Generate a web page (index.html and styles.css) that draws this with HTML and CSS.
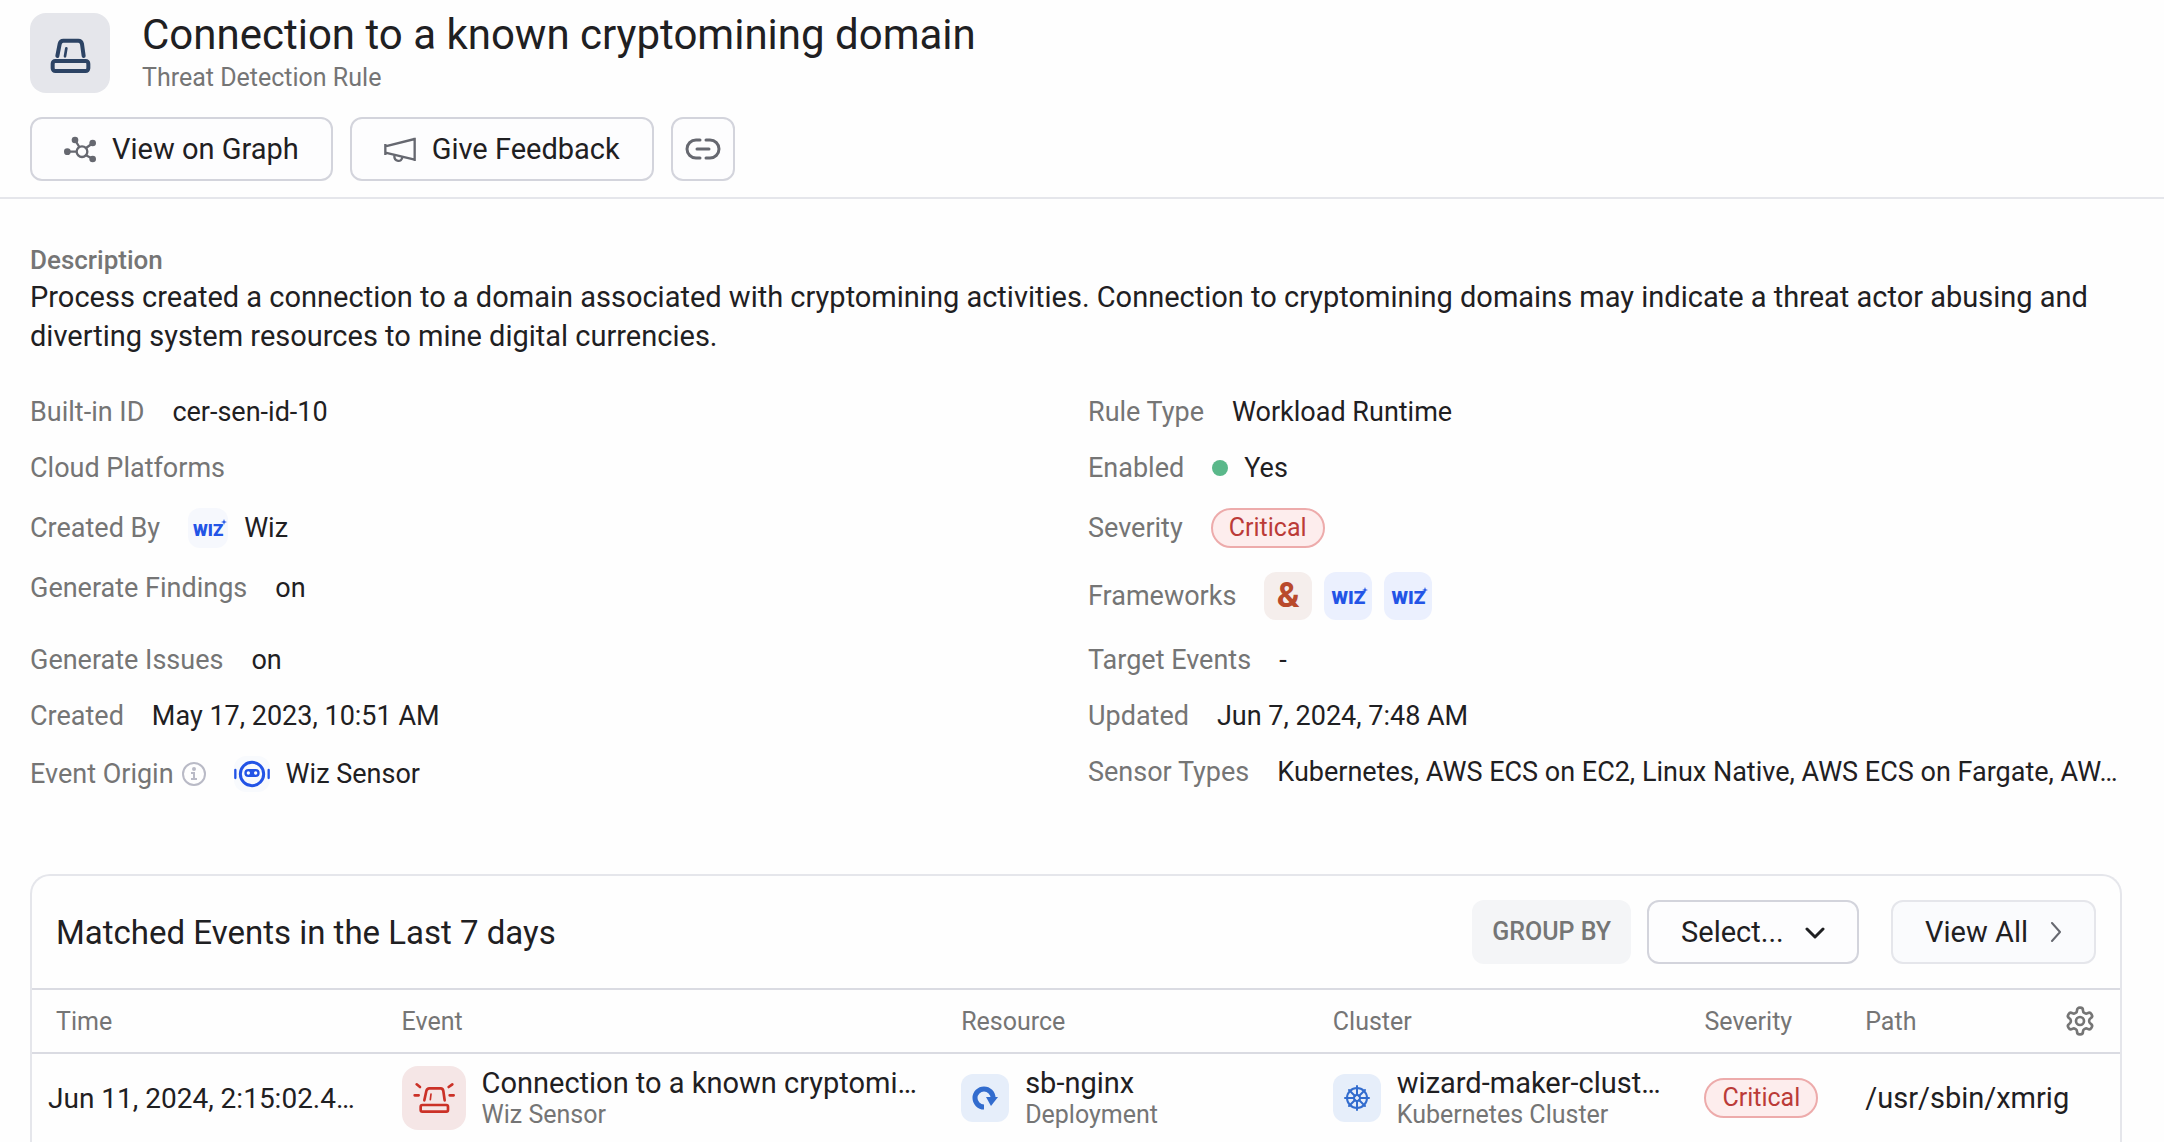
FILE: index.html
```
<!DOCTYPE html>
<html lang="en">
<head>
    <meta charset="UTF-8">
    <meta name="viewport" content="width=device-width, initial-scale=1.0">
    <title>Connection to a known cryptomining domain</title>
    <link rel="stylesheet" href="styles.css">
</head>
<body>
    <header class="page-header">
        <div class="rule-heading">
            <div class="rule-icon">
                <svg viewBox="0 0 240 240" fill="none" stroke="currentColor" stroke-width="12" stroke-linecap="round" stroke-linejoin="round">
                    <path d="M82 129 89 93q2-10 11-10h45q9 0 11 10l5 36"/>
                    <path d="M109 106l-4 24" stroke-width="8"/>
                    <rect x="68" y="144" width="107" height="30" rx="8"/>
                </svg>
            </div>
            <div>
                <h1 class="rule-title">Connection to a known cryptomining domain</h1>
                <p class="rule-type">Threat Detection Rule</p>
            </div>
        </div>
        <div class="actions">
            <button class="button" type="button">
                <svg width="32" height="28" viewBox="0 0 96 84" fill="none" stroke="currentColor" stroke-width="7">
                    <circle cx="54" cy="50" r="16"/>
                    <path d="M33 15l13 21M87 24 66 39M9 50h29M87 72 66 61"/>
                    <g fill="currentColor" stroke="none">
                        <circle cx="33" cy="15" r="10"/>
                        <circle cx="86" cy="24" r="10"/>
                        <circle cx="10" cy="50" r="10"/>
                        <circle cx="86" cy="72" r="10"/>
                    </g>
                </svg>
                View on Graph
            </button>
            <button class="button" type="button">
                <svg width="32" height="28" viewBox="0 0 96 84" fill="none" stroke="currentColor" stroke-width="7">
                    <path d="M4 27v33M4 34 92 12M4 53l88 21M92 8v70"/>
                    <path d="M31 61c-1 20 23 22 24 5"/>
                </svg>
                Give Feedback
            </button>
            <button class="button button-icon" type="button" aria-label="Copy link">
                <svg width="36" height="24" viewBox="0 0 36 24" fill="none" stroke="currentColor" stroke-width="3" stroke-linecap="round">
                    <path d="M15 3h-4a9 9 0 0 0 0 18h4M21 3h4a9 9 0 0 1 0 18h-4M12 12h12"/>
                </svg>
            </button>
        </div>
    </header>

    <main>
        <section class="details">
            <h2 class="description-label">Description</h2>
            <p class="description">Process created a connection to a domain associated with cryptomining activities. Connection to cryptomining domains may indicate a threat actor abusing and diverting system resources to mine digital currencies.</p>

            <dl class="properties">
                <div class="property">
                    <dt>Built-in ID</dt>
                    <dd>cer-sen-id-10</dd>
                </div>
                <div class="property">
                    <dt>Rule Type</dt>
                    <dd>Workload Runtime</dd>
                </div>
                <div class="property">
                    <dt>Cloud Platforms</dt>
                    <dd></dd>
                </div>
                <div class="property">
                    <dt>Enabled</dt>
                    <dd><span class="status-dot"></span>Yes</dd>
                </div>
                <div class="property">
                    <dt>Created By</dt>
                    <dd>
                        <span class="wiz-tile wiz-small">WIZ<svg viewBox="0 0 8 8"><path d="M4 0l1 3 3 1-3 1-1 3-1-3-3-1 3-1z" fill="currentColor"/></svg></span>
                        Wiz
                    </dd>
                </div>
                <div class="property">
                    <dt>Severity</dt>
                    <dd><span class="badge">Critical</span></dd>
                </div>
                <div class="property">
                    <dt>Generate Findings</dt>
                    <dd>on</dd>
                </div>
                <div class="property">
                    <dt>Frameworks</dt>
                    <dd class="frameworks">
                        <span class="amp-tile">&amp;</span>
                        <span class="wiz-tile">WIZ<svg viewBox="0 0 8 8"><path d="M4 0l1 3 3 1-3 1-1 3-1-3-3-1 3-1z" fill="currentColor"/></svg></span>
                        <span class="wiz-tile">WIZ<svg viewBox="0 0 8 8"><path d="M4 0l1 3 3 1-3 1-1 3-1-3-3-1 3-1z" fill="currentColor"/></svg></span>
                    </dd>
                </div>
                <div class="property">
                    <dt>Generate Issues</dt>
                    <dd>on</dd>
                </div>
                <div class="property">
                    <dt>Target Events</dt>
                    <dd>-</dd>
                </div>
                <div class="property">
                    <dt>Created</dt>
                    <dd>May 17, 2023, 10:51 AM</dd>
                </div>
                <div class="property">
                    <dt>Updated</dt>
                    <dd>Jun 7, 2024, 7:48 AM</dd>
                </div>
                <div class="property">
                    <dt>
                        Event Origin
                        <svg class="info" width="24" height="24" viewBox="0 0 24 24" fill="none" stroke="currentColor" stroke-width="2">
                            <circle cx="12" cy="12" r="11"/>
                            <path d="M9 11h3v6M9 17h6"/>
                            <circle cx="12" cy="7" r="1"/>
                        </svg>
                    </dt>
                    <dd>
                        <svg class="sensor" width="36" height="36" viewBox="0 0 108 108" fill="none" stroke="currentColor">
                            <circle cx="54" cy="54" r="35" stroke-width="9"/>
                            <path d="M4 42v24M104 42v24" stroke-width="7" stroke-linecap="round"/>
                            <rect x="31" y="39" width="46" height="24" rx="12" fill="currentColor" stroke="none"/>
                            <circle cx="43" cy="51" r="5" fill="#fff" stroke="none"/>
                            <circle cx="65" cy="51" r="5" fill="#fff" stroke="none"/>
                        </svg>
                        Wiz Sensor
                    </dd>
                </div>
                <div class="property">
                    <dt>Sensor Types</dt>
                    <dd><span class="truncate">Kubernetes, AWS ECS on EC2, Linux Native, AWS ECS on Fargate, AW…</span></dd>
                </div>
            </dl>
        </section>

        <section class="events-card">
            <div class="events-toolbar">
                <h2 class="events-title">Matched Events in the Last 7 days</h2>
                <label class="group-label" for="groupBy">GROUP BY</label>
                <div class="select-wrap">
                    <select class="select" id="groupBy">
                        <option>Select...</option>
                    </select>
                    <svg class="select-arrow" width="20" height="12" viewBox="0 0 20 12" fill="none" stroke="currentColor" stroke-width="3" stroke-linecap="round" stroke-linejoin="round">
                        <path d="M2 2l8 8 8-8"/>
                    </svg>
                </div>
                <button class="button view-all" type="button">
                    View All
                    <svg width="12" height="20" viewBox="0 0 12 20" fill="none" stroke="currentColor" stroke-width="2" stroke-linecap="round" stroke-linejoin="round">
                        <path d="M2 1l8 9-8 9"/>
                    </svg>
                </button>
            </div>

            <table class="events">
                <thead>
                    <tr>
                        <th class="col-time">Time</th>
                        <th class="col-event">Event</th>
                        <th class="col-resource">Resource</th>
                        <th class="col-cluster">Cluster</th>
                        <th class="col-severity">Severity</th>
                        <th class="col-path">
                            <div class="path-head">
                                Path
                                <button class="settings" type="button" aria-label="Table settings">
                                    <svg width="32" height="32" viewBox="0 0 24 24" fill="none" stroke="currentColor" stroke-width="2" stroke-linecap="round" stroke-linejoin="round">
                                        <path d="M12.22 2h-.44a2 2 0 0 0-2 2v.18a2 2 0 0 1-1 1.73l-.43.25a2 2 0 0 1-2 0l-.15-.08a2 2 0 0 0-2.73.73l-.22.38a2 2 0 0 0 .73 2.73l.15.1a2 2 0 0 1 1 1.72v.51a2 2 0 0 1-1 1.74l-.15.09a2 2 0 0 0-.73 2.73l.22.38a2 2 0 0 0 2.73.73l.15-.08a2 2 0 0 1 2 0l.43.25a2 2 0 0 1 1 1.73V20a2 2 0 0 0 2 2h.44a2 2 0 0 0 2-2v-.18a2 2 0 0 1 1-1.73l.43-.25a2 2 0 0 1 2 0l.15.08a2 2 0 0 0 2.73-.73l.22-.39a2 2 0 0 0-.73-2.73l-.15-.08a2 2 0 0 1-1-1.74v-.5a2 2 0 0 1 1-1.74l.15-.09a2 2 0 0 0 .73-2.73l-.22-.38a2 2 0 0 0-2.73-.73l-.15.08a2 2 0 0 1-2 0l-.43-.25a2 2 0 0 1-1-1.73V4a2 2 0 0 0-2-2z"/>
                                        <circle cx="12" cy="12" r="3"/>
                                    </svg>
                                </button>
                            </div>
                        </th>
                    </tr>
                </thead>
                <tbody>
                    <tr>
                        <td class="time">Jun 11, 2024, 2:15:02.4…</td>
                        <td>
                            <div class="entity">
                                <span class="tile tile-alert">
                                    <svg viewBox="0 0 192 192" fill="none" stroke="currentColor" stroke-width="8" stroke-linecap="round" stroke-linejoin="round">
                                        <path d="M67 103l6-28q2-8 9-8h34q7 0 8 8l4 28"/>
                                        <path d="M87 84l-2 17" stroke-width="5"/>
                                        <rect x="56" y="117" width="82" height="20" rx="5"/>
                                        <path d="M38 88h12M143 88h12M44 55l10 8M151 55l-11 8"/>
                                    </svg>
                                </span>
                                <div class="entity-text">
                                    <div class="truncate">Connection to a known cryptomi…</div>
                                    <div class="entity-kind">Wiz Sensor</div>
                                </div>
                            </div>
                        </td>
                        <td>
                            <div class="entity">
                                <span class="tile">
                                    <svg viewBox="0 0 48 48">
                                        <path d="M23 33a9 9 0 1 1 9-9" fill="none" stroke="currentColor" stroke-width="5"/>
                                        <path d="M25 23h12l-7 9z" fill="currentColor"/>
                                    </svg>
                                </span>
                                <div class="entity-text">
                                    <div class="truncate">sb-nginx</div>
                                    <div class="entity-kind">Deployment</div>
                                </div>
                            </div>
                        </td>
                        <td>
                            <div class="entity">
                                <span class="tile">
                                    <svg viewBox="0 0 48 48" fill="none" stroke="currentColor" stroke-width="2" stroke-linecap="round">
                                        <circle cx="24" cy="24" r="10"/>
                                        <circle cx="24" cy="24" r="3"/>
                                        <path d="M24 12v9M24 27v9M12 24h9M27 24h9M16 16l6 6M26 26l6 6M32 16l-6 6M22 26l-6 6"/>
                                    </svg>
                                </span>
                                <div class="entity-text">
                                    <div class="truncate">wizard-maker-clust…</div>
                                    <div class="entity-kind">Kubernetes Cluster</div>
                                </div>
                            </div>
                        </td>
                        <td><span class="badge">Critical</span></td>
                        <td>/usr/sbin/xmrig</td>
                    </tr>
                </tbody>
            </table>
        </section>
    </main>
</body>
</html>
```
FILE: styles.css
```
:root {
    --text: #1f2022;
    --muted: #757575;
    --line: #dadbe2;
    --line-soft: #e5e6eb;
    --wiz: #2354e6;
    --icon: #666870;
}

* {
    box-sizing: border-box;
}

body {
    margin: 0;
    background: #fefefe;
    color: var(--text);
    font-family: Roboto, "Noto Sans", sans-serif;
    font-size: 29px;
}

h1, h2, p, dl, dd {
    margin: 0;
    font-weight: 400;
}

svg {
    flex: none;
}

/* Header */
.page-header {
    padding: 10px 30px 16px;
    border-bottom: 2px solid var(--line-soft);
}

.rule-heading {
    display: flex;
    align-items: center;
    gap: 32px;
}

.rule-icon {
    width: 80px;
    height: 80px;
    border-radius: 16px;
    background: #e5e6eb;
    color: #2c4364;
}

.rule-title {
    font-size: 42px;
    line-height: 50px;
}

.rule-type {
    font-size: 25px;
    line-height: 36px;
    color: var(--muted);
}

.actions {
    display: flex;
    gap: 17px;
    margin-top: 21px;
}

.button {
    display: flex;
    align-items: center;
    justify-content: center;
    gap: 16px;
    height: 64px;
    padding: 0 32px;
    border: 2px solid #d3d4dc;
    border-radius: 12px;
    background: #fdfdfe;
    color: var(--text);
    font: inherit;
    white-space: nowrap;
    cursor: pointer;
}

.button svg {
    color: var(--icon);
}

.button-icon {
    width: 64px;
    padding: 0;
}

/* Rule details */
.details {
    padding: 43px 42px 0 30px;
}

.description-label {
    font-size: 26px;
    font-weight: 500;
    line-height: 36px;
    color: var(--muted);
}

.description {
    line-height: 39px;
}

.properties {
    display: grid;
    grid-template-columns: repeat(2, minmax(0, 1fr));
    gap: 24px;
    align-items: start;
    margin-top: 40px;
    font-size: 27px;
    line-height: 32px;
}

.property {
    display: flex;
    align-items: center;
    gap: 28px;
}

.property dt {
    display: flex;
    align-items: center;
    gap: 8px;
    flex: none;
    color: var(--muted);
}

.property dd {
    display: flex;
    align-items: center;
    gap: 16px;
    min-width: 0;
}

.property .frameworks {
    gap: 12px;
}

.status-dot {
    width: 16px;
    height: 16px;
    border-radius: 50%;
    background: #5ab88a;
}

.badge {
    display: inline-block;
    height: 40px;
    padding: 0 16px;
    border: 2px solid #edabab;
    border-radius: 20px;
    background: #fdeded;
    color: #bb3b38;
    font-size: 25px;
    line-height: 36px;
    vertical-align: middle;
}

.wiz-tile,
.amp-tile {
    position: relative;
    display: flex;
    align-items: center;
    justify-content: center;
    width: 48px;
    height: 48px;
    border-radius: 12px;
}

.wiz-tile {
    padding-top: 4px;
    background: #ebf0fe;
    color: var(--wiz);
    font-size: 19px;
    font-weight: 900;
}

.wiz-tile svg {
    position: absolute;
    top: 15px;
    right: 4px;
    width: 6px;
    height: 6px;
}

.wiz-small {
    width: 40px;
    height: 40px;
    background: #f6f8fd;
    font-size: 17px;
}

.wiz-small svg {
    top: 11px;
    right: 1px;
}

.amp-tile {
    background: #f5eeec;
    color: #b94a2c;
    font-size: 35px;
    font-weight: 700;
}

.info {
    color: #b9bac6;
}

.sensor {
    border-radius: 12px;
    background: #f8fafd;
    color: var(--wiz);
}

.truncate {
    overflow: hidden;
    text-overflow: ellipsis;
    white-space: nowrap;
}

/* Matched events */
.events-card {
    margin: 82px 42px 0 30px;
    border: 2px solid var(--line-soft);
    border-bottom: none;
    border-radius: 20px 20px 0 0;
}

.events-toolbar {
    display: flex;
    align-items: center;
    padding: 24px;
    border-bottom: 2px solid var(--line);
}

.events-title {
    flex: 1;
    font-size: 33px;
}

.group-label {
    padding: 0 20px;
    margin-right: 16px;
    border-radius: 12px;
    background: #f4f5f7;
    color: var(--muted);
    font-size: 25px;
    font-weight: 500;
    line-height: 64px;
}

.select-wrap {
    position: relative;
    margin-right: 32px;
}

.select {
    width: 212px;
    height: 64px;
    padding: 0 32px;
    border: 2px solid #d3d4dc;
    border-radius: 12px;
    background: #fdfdfe;
    color: var(--text);
    font: inherit;
    appearance: none;
}

.select-arrow {
    position: absolute;
    top: 27px;
    right: 34px;
    pointer-events: none;
}

.view-all {
    gap: 22px;
    border-color: var(--line-soft);
    background: #fafbfd;
}

.events {
    width: 100%;
    table-layout: fixed;
    border-spacing: 0;
}

.events th {
    height: 64px;
    padding: 0;
    border-bottom: 2px solid var(--line);
    color: var(--muted);
    font-size: 25px;
    font-weight: 400;
    text-align: left;
}

.events td {
    height: 88px;
    padding: 0;
    white-space: nowrap;
}

.events .col-time {
    width: 17.7%;
    padding-left: 24px;
}

.events .time {
    padding-left: 16px;
    font-size: 28px;
}

.col-event {
    width: 26.8%;
}

.col-resource,
.col-cluster {
    width: 17.8%;
}

.col-severity {
    width: 7.7%;
}

.path-head {
    display: flex;
    align-items: center;
    justify-content: space-between;
    padding-right: 24px;
}

.settings {
    display: flex;
    padding: 0;
    border: none;
    background: none;
    color: var(--muted);
    cursor: pointer;
}

.entity {
    display: flex;
    align-items: center;
    gap: 16px;
    padding-right: 32px;
}

.entity-text {
    min-width: 0;
    line-height: 34px;
}

.entity-kind {
    color: var(--muted);
    font-size: 25px;
    line-height: 30px;
}

.tile {
    flex: none;
    width: 48px;
    height: 48px;
    border-radius: 12px;
    background: #e6eefa;
    color: #326cce;
}

.tile-alert {
    width: 64px;
    height: 64px;
    border-radius: 16px;
    background: #f5e6e6;
    color: #cb3127;
}
```
